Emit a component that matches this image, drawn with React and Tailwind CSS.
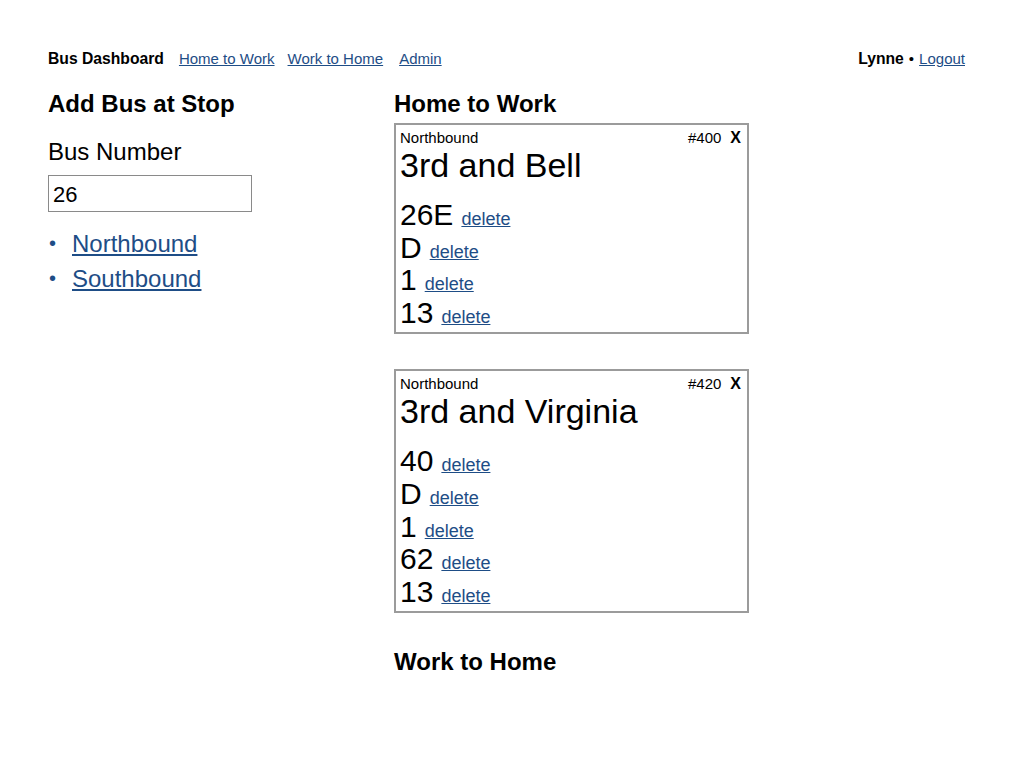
import React from "react";

const font = { fontFamily: '"Liberation Sans", Arial, Helvetica, sans-serif' };

function Card({ direction, stop, id, buses }) {
  return (
    <div className="w-[355px] border-2 border-[#9b9b9b] px-[4px] pt-[4px] pb-[3px] mb-[35px] bg-white">
      <div className="flex items-center justify-between text-[15px] leading-[18px] text-black">
        <span>{direction}</span>
        <span className="flex items-center gap-[9px] pr-[2px]">
          <span>{id}</span>
          <span className="font-bold text-[16px]">X</span>
        </span>
      </div>
      <div className="text-[34px] leading-[36px] text-black">{stop}</div>
      <div className="mt-[16px]">
        {buses.map((b, i) => (
          <div key={i} className="flex items-baseline h-[32.6px] text-[30px] leading-[32.6px] text-black">
            <span>{b}</span>
            <a href="#" className="ml-[8px] text-[18px] leading-[18px] text-[#1e4d86] underline">
              delete
            </a>
          </div>
        ))}
      </div>
    </div>
  );
}

export default function App() {
  return (
    <div className="min-h-[768px] bg-white text-black pt-[40px] pl-[48px] pr-[59px]" style={font}>
      <nav className="h-[38px] flex items-center justify-between text-[15px]">
        <div className="flex items-center">
          <span className="font-bold text-[15.7px] mr-[15px]">Bus Dashboard</span>
          <a href="#" className="text-[#1e4d86] underline mr-[13px]">Home to Work</a>
          <a href="#" className="text-[#1e4d86] underline mr-[16px]">Work to Home</a>
          <a href="#" className="text-[#1e4d86] underline">Admin</a>
        </div>
        <div className="flex items-center">
          <span className="font-bold text-[15.7px]">Lynne</span>
          <span className="mx-[5px]">•</span>
          <a href="#" className="text-[#1e4d86] underline">Logout</a>
        </div>
      </nav>
      <div className="flex mt-[12px]">
        <div className="w-[346px] shrink-0">
          <h2 className="text-[24px] leading-[28px] font-bold">Add Bus at Stop</h2>
          <div className="mt-[19px] text-[24px] leading-[30px]">Bus Number</div>
          <input
            readOnly
            value="26"
            className="mt-[8px] w-[204px] h-[37px] border border-[#8a8a8a] px-[4px] pt-[3px] text-[22px] text-black outline-none"
            style={font}
          />
          <ul className="mt-[14px] text-[24px] leading-[35px]">
            {["Northbound", "Southbound"].map((d) => (
              <li key={d} className="flex items-center">
                <span className="w-[24px] text-[#1e4d86] text-[20px] pl-[1px]">•</span>
                <a href="#" className="text-[#1e4d86] underline">{d}</a>
              </li>
            ))}
          </ul>
        </div>
        <div className="flex-1">
          <h2 className="text-[24px] leading-[28px] font-bold">Home to Work</h2>
          <div className="mt-[5px]">
            <Card direction="Northbound" stop="3rd and Bell" id="#400" buses={["26E", "D", "1", "13"]} />
            <Card direction="Northbound" stop="3rd and Virginia" id="#420" buses={["40", "D", "1", "62", "13"]} />
          </div>
          <h2 className="text-[24px] leading-[28px] font-bold">Work to Home</h2>
        </div>
      </div>
    </div>
  );
}
